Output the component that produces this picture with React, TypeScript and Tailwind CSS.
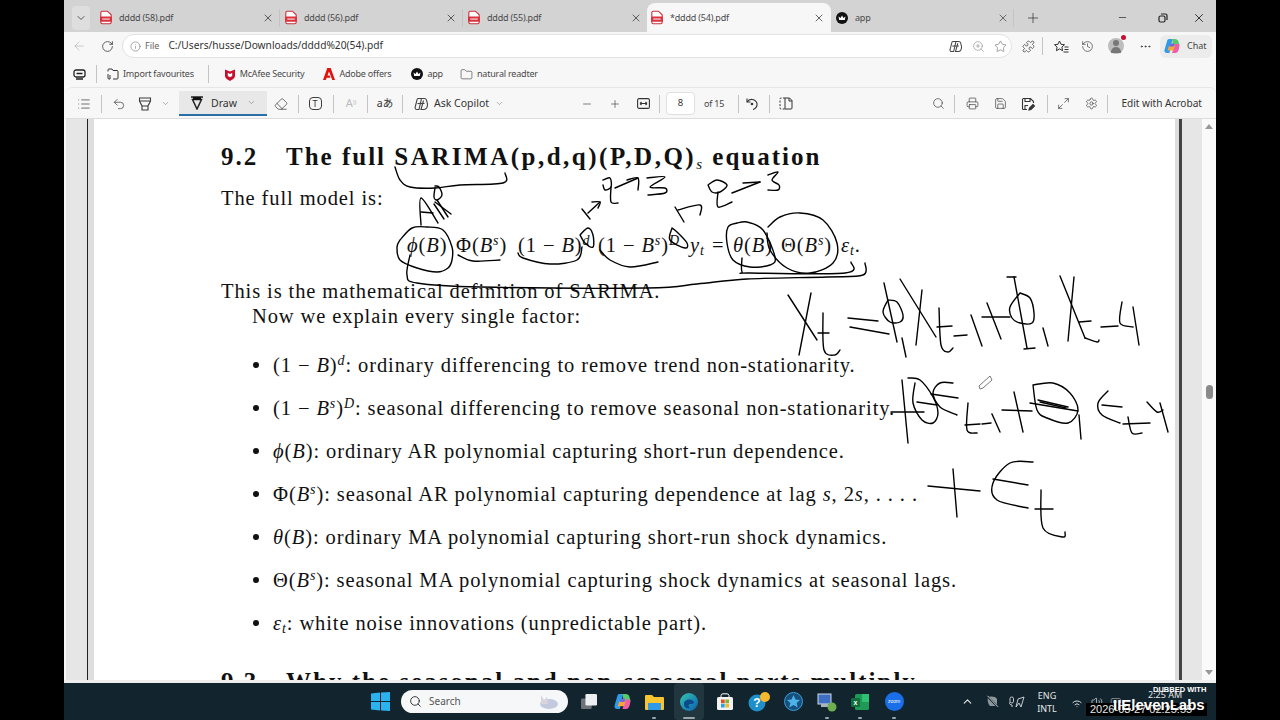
import React from "react";
import {
  ChevronDown, X, Plus, Minus, ArrowLeft, RotateCw, Info, Star, ZoomIn, List, Undo2, Eraser, Search,
  Printer, Save, Maximize2, Settings, ChevronUp, WifiHigh, Volume2, Folder, History, MoreHorizontal, Puzzle, BatteryMedium
} from "lucide-react";

const P = (pts: number[][]) => {
  if (pts.length < 3) return `M${pts[0][0]} ${pts[0][1]} L${pts[1][0]} ${pts[1][1]}`;
  let d = `M${pts[0][0]} ${pts[0][1]}`;
  for (let i = 0; i < pts.length - 1; i++) {
    const p0 = pts[Math.max(0, i - 1)];
    const p1 = pts[i];
    const p2 = pts[i + 1];
    const p3 = pts[Math.min(pts.length - 1, i + 2)];
    const c1x = p1[0] + (p2[0] - p0[0]) / 6;
    const c1y = p1[1] + (p2[1] - p0[1]) / 6;
    const c2x = p2[0] - (p3[0] - p1[0]) / 6;
    const c2y = p2[1] - (p3[1] - p1[1]) / 6;
    d += ` C${c1x} ${c1y} ${c2x} ${c2y} ${p2[0]} ${p2[1]}`;
  }
  return d;
};

const strokes: number[][][] = [
  [[395,167],[400,180],[410,187],[435,188],[460,185],[503,183],[505,173]],
  [[435,188],[434,197],[437,200],[442,195],[439,187],[435,186]],
  [[435,202],[451,214]],[[437,200],[448,217]],[[434,204],[444,219]],
  [[421,225],[421,198],[438,223]],[[421,212],[433,213]],
  [[400,240],[412,228],[427,227],[443,230],[452,247],[452,260],[448,268],[437,272],[417,268],[400,260],[397,247],[400,240]],
  [[410,255],[407,275],[417,283],[480,287],[647,288],[697,284],[747,279],[827,277],[863,275],[865,263]],
  [[458,255],[473,261],[500,260]],
  [[518,253],[523,258],[550,264],[577,260],[582,247]],
  [[580,235],[588,228],[593,235],[593,247],[585,243],[580,235]],
  [[600,250],[610,260],[630,267],[658,262]],
  [[672,228],[670,240],[685,248],[687,243],[677,232],[672,228]],
  [[737,223],[747,222],[763,230],[775,257],[770,265],[750,267],[733,260],[727,243],[728,227],[737,223]],
  [[768,227],[780,217],[800,213],[823,220],[837,243],[833,263],[810,273],[787,268],[770,250],[767,233]],
  [[742,258],[742,272],[750,273],[845,273],[851,262]],
  [[582,209],[590,219]],[[588,213],[600,202]],[[592,202],[600,202],[598,208]],
  [[603,180],[610,178],[611,187],[605,190],[603,185]],[[611,187],[611,202],[618,203]],
  [[615,188],[638,178]],[[627,180],[638,178],[638,190]],
  [[647,178],[665,177],[650,187],[665,188],[665,193],[648,195]],
  [[675,207],[684,222]],[[678,210],[700,205],[700,215]],
  [[708,185],[717,180],[727,185],[720,192],[712,192],[708,185]],[[718,192],[718,207],[732,202]],
  [[732,193],[760,182]],[[743,183],[760,182]],
  [[768,175],[778,172],[772,180],[779,185],[778,190],[768,190]],
  [[788,295],[817,340]],[[811,293],[799,355]],
  [[818,333],[829,333]],[[823,313],[824,350],[835,355],[840,350]],
  [[848,318],[878,321]],[[850,327],[889,334]],
  [[884,283],[897,342]],[[888,300],[897,302],[903,315],[900,322],[890,322],[883,312],[888,300]],
  [[902,338],[906,357]],
  [[900,279],[936,337]],[[922,290],[916,345]],
  [[937,327],[952,326]],[[939,308],[941,345],[948,352],[953,348]],
  [[954,336],[967,335]],[[971,315],[982,346]],
  [[982,317],[1010,317]],[[987,303],[1001,339]],
  [[1007,277],[1016,277]],[[1014,277],[1027,348]],[[1024,349],[1035,348]],
  [[1020,293],[1030,298],[1034,313],[1032,323],[1020,323],[1012,318],[1010,307],[1020,293]],
  [[1043,328],[1048,346]],
  [[1060,276],[1085,338]],[[1074,277],[1068,341]],
  [[1079,322],[1091,321]],[[1085,338],[1097,342],[1099,340]],
  [[1101,327],[1118,326]],
  [[1122,302],[1120,323],[1133,327]],[[1133,307],[1139,345]],
  [[902,380],[908,443]],[[891,412],[924,412]],
  [[908,378],[920,380],[933,397],[938,413],[933,423],[922,420],[913,403],[915,383]],
  [[917,402],[937,405]],
  [[953,383],[940,383],[933,393],[940,407],[957,415]],[[931,394],[958,398]],
  [[965,425],[980,424]],[[968,403],[967,430],[977,433]],
  [[982,424],[991,423]],[[992,414],[1000,432]],
  [[1002,410],[1032,411]],[[1014,392],[1023,432]],
  [[1033,385],[1053,383],[1070,393],[1078,410],[1068,423],[1047,418],[1037,410],[1033,385]],
  [[1030,403],[1078,411]],[[1038,400],[1068,407]],[[1040,402],[1066,408]],
  [[1079,415],[1081,439]],
  [[1108,391],[1098,403],[1102,415],[1120,423]],[[1102,405],[1122,407]],
  [[1123,424],[1150,423]],[[1128,417],[1132,433],[1142,433]],
  [[1147,402],[1157,412],[1163,410]],[[1160,403],[1168,432]],
  [[928,486],[980,491]],[[953,469],[957,517]],
  [[1033,462],[1010,463],[993,483],[997,500],[1028,508]],[[993,479],[1028,485]],
  [[1035,509],[1053,509]],[[1041,490],[1043,528],[1063,537],[1065,532]],
];

const Ink = () => (
  <svg className="absolute left-0 top-0 w-[1280px] h-[680px] pointer-events-none" viewBox="0 0 1280 680" fill="none">
    <g stroke="#000" strokeWidth="1.4" strokeLinecap="round" strokeLinejoin="round">
      {strokes.map((s, i) => <path key={i} d={P(s)} />)}
    </g>
    <path d="M979 386 L980 389 L983 388 L992 380 L990 376 Z" fill="#fff" stroke="#555" strokeWidth="0.8" />
  </svg>
);

const PdfIcon = () => (
  <svg width="12" height="15" viewBox="0 0 13 15">
    <path d="M2.5.7h5.6l4 3.8v8.2a1.6 1.6 0 0 1-1.6 1.6h-8a1.6 1.6 0 0 1-1.6-1.6V2.3A1.6 1.6 0 0 1 2.5.7z" fill="#fff" stroke="#c9303a" strokeWidth="1.2" />
    <rect x="0" y="6.5" width="13" height="5.5" rx="1" fill="#d9343f" />
    <rect x="2.5" y="8.5" width="8" height="1.4" fill="#fff" opacity="0.75" />
  </svg>
);
const Crown = ({ s = 12 }: { s?: number }) => (
  <svg width={s} height={s} viewBox="0 0 12 12">
    <circle cx="6" cy="6" r="6" fill="#111" />
    <path d="M2.5 4.5 L4.5 6 L6 3.5 L7.5 6 L9.5 4.5 L8.8 8 H3.2 Z" fill="#fff" />
  </svg>
);
const CopilotLogo = ({ s = 16 }: { s?: number }) => (
  <svg width={s} height={s} viewBox="0 0 16 16">
    <path d="M5 1h3.5L5.5 15H3C1 15 0 13.5.6 11.5L3 3.2C3.4 1.8 4 1 5 1z" fill="#2f9be8" />
    <path d="M8 1h3c1.8 0 3 .8 3.6 2.8l1 4.2H9z" fill="#58c96c" />
    <path d="M11.5 15H8l3-9h4.2c.6 3-.8 9-3.7 9z" fill="#ef5da8" />
    <path d="M5 8h6l-1.5 4.5h-6z" fill="#f3a53a" />
    <path d="M6.5 5.5h4l-1 3h-4z" fill="#7b62e0" />
  </svg>
);
const CopilotOutline = ({ s = 13 }: { s?: number }) => (
  <svg width={s} height={s} viewBox="0 0 14 14" fill="none" stroke="#444" strokeWidth="1.1">
    <path d="M4 1.5h3.5L5 12.5H3C1.5 12.5.8 11.2 1.2 10L3 3C3.2 2 3.5 1.5 4 1.5z" />
    <path d="M7 1.5h3.5c1 0 1.7.6 2 1.6l.9 3.6c.4 3-1 5.8-3.4 5.8H7l2.5-9" />
    <path d="M3.5 6.5h7" />
  </svg>
);

const Sep = ({ className }: { className: string }) => (
  <div className={`flex justify-center shrink-0 ${className}`}><div className="w-px h-[18px] bg-[#c4c4c4]" /></div>
);
const Cell = ({ className, children }: { className: string; children: React.ReactNode }) => (
  <div className={`flex items-center justify-center shrink-0 h-full ${className}`}>{children}</div>
);
const ic = { size: 14, strokeWidth: 1.25, color: "#3c3c3c" };
const small = "text-[9px] tracking-[-0.2px] text-[#4a4a4a] whitespace-nowrap";

const Tab = ({ title, w, icon, className }: { title: string; w: string; icon: React.ReactNode; className?: string }) => (
  <div className={`flex items-center h-full shrink-0 ${w} ${className ?? ""}`}>
    <div className="w-[23px] pr-[4px] flex justify-center shrink-0">{icon}</div>
    <span className={small}>{title}</span>
  </div>
);

const TabStrip = () => (
  <div className="h-[32px] bg-[#d3d3d3] flex items-end pl-[6px] shrink-0">
    <div className="flex items-center h-[29px] w-full">
      <div className="w-[18px] h-[24px] bg-[#dedede] rounded flex items-center justify-center ml-[2px]"><ChevronDown size={12} strokeWidth={1.6} color="#333" /></div>
      <div className="w-[6px]" />
      <Tab title="dddd (58).pdf" w="w-[164px]" icon={<PdfIcon />} />
      <Cell className="w-[16px]"><X size={12} strokeWidth={1.5} color="#333" /></Cell>
      <Sep className="w-[6px]" />
      <Tab title="dddd (56).pdf" w="w-[162px]" icon={<PdfIcon />} className="ml-[-1px]" />
      <Cell className="w-[16px]"><X size={12} strokeWidth={1.5} color="#333" /></Cell>
      <Sep className="w-[6px]" />
      <Tab title="dddd (55).pdf" w="w-[164px]" icon={<PdfIcon />} className="ml-[-1px]" />
      <Cell className="w-[16px]"><X size={12} strokeWidth={1.5} color="#333" /></Cell>
      <div className="flex items-center w-[184px] h-full bg-[#f7f7f7] rounded-t-lg ml-[3px] shrink-0">
        <div className="w-[23px] pr-[4px] flex justify-center shrink-0"><PdfIcon /></div>
        <span className={`${small} w-[143px]`}>*dddd (54).pdf</span>
        <X size={12} strokeWidth={1.5} color="#333" />
      </div>
      <Tab title="app" w="w-[169px]" icon={<Crown />} className="ml-[1px]" />
      <Cell className="w-[12px] ml-[-4px]"><X size={12} strokeWidth={1.5} color="#444" /></Cell>
      <Sep className="w-[8px]" />
      <Cell className="w-[24px] ml-[4px]"><Plus size={16} strokeWidth={1.1} color="#333" /></Cell>
      <Cell className="w-[14px] ml-[70px]"><Minus size={11} strokeWidth={1.5} color="#222" /></Cell>
      <Cell className="w-[14px] ml-[27px]">
        <svg width="10" height="10" viewBox="0 0 10 10" fill="none" stroke="#222" strokeWidth="1.2"><rect x="1" y="3" width="6" height="6" rx="1.5" /><path d="M3 1h4.5A1.5 1.5 0 0 1 9 2.5V7" /></svg>
      </Cell>
      <Cell className="w-[14px] ml-[22px]"><X size={14} strokeWidth={1.4} color="#111" /></Cell>
    </div>
  </div>
);

const AddressBar = () => (
  <div className="h-[28px] bg-[#f7f7f7] flex items-center shrink-0">
    <Cell className="w-[30px]"><ArrowLeft size={14} strokeWidth={1.2} color="#b5b5b5" /></Cell>
    <Cell className="w-[26px]"><RotateCw size={13} strokeWidth={1.4} color="#333" /></Cell>
    <div className="w-[890px] h-[24px] ml-[2px] rounded-full bg-white border border-[#e2e2e2] flex items-center pl-[7px] shrink-0">
      <Info size={11} strokeWidth={1.2} color="#666" />
      <span className="text-[9px] text-[#666] ml-[4px]">File</span>
      <span className="text-[10.2px] text-[#333] ml-[9px] whitespace-nowrap">C:/Users/husse/Downloads/dddd%20(54).pdf</span>
      <div className="flex-1" />
      <CopilotOutline />
      <Cell className="w-[21px] ml-[6px]"><ZoomIn size={13} strokeWidth={1.1} color="#888" /></Cell>
      <Cell className="w-[21px] ml-[1px]"><Star size={13} strokeWidth={1.1} color="#666" /></Cell>
    </div>
    <Cell className="w-[26px] ml-[3px]"><Puzzle size={13} strokeWidth={1.3} color="#333" /></Cell>
    <Sep className="w-[2px]" />
    <Cell className="w-[26px] ml-[5px]">
      <svg width="15" height="13" viewBox="0 0 15 13" fill="none" stroke="#333" strokeWidth="1"><path d="M5.5 1l1.5 3.3 3.5.4-2.6 2.4.7 3.6-3.1-1.8-3.1 1.8.7-3.6L.5 4.7 4 4.3z" /><path d="M10.5 7h4M10.5 9.5h4M9.5 12h5" /></svg>
    </Cell>
    <Cell className="w-[26px]"><History size={13} strokeWidth={1.2} color="#333" /></Cell>
    <Cell className="w-[32px]">
      <div className="relative w-[16px] h-[16px] rounded-full bg-[#bdbdbd]">
        <div className="absolute right-[-2px] top-[-3px] w-[5px] h-[5px] rounded-full bg-[#c8102e]" />
        <div className="absolute left-[5px] top-[2px] w-[6px] h-[6px] rounded-full bg-[#777]" />
        <div className="absolute left-[3px] top-[9px] w-[10px] h-[6px] rounded-t-full bg-[#777]" />
      </div>
    </Cell>
    <Cell className="w-[26px]"><MoreHorizontal size={13} strokeWidth={1.5} color="#333" /></Cell>
    <div className="flex items-center w-[52px] h-[23px] bg-[#ececec] rounded-md pl-[4px] gap-[7px] ml-[2px]">
      <CopilotLogo />
      <span className="text-[9px] text-[#444]">Chat</span>
    </div>
  </div>
);

const Bookmark = ({ icon, label, className }: { icon: React.ReactNode; label: string; className: string }) => (
  <div className={`flex items-center gap-[4px] shrink-0 ${className}`}>
    {icon}
    <span className={small}>{label}</span>
  </div>
);

const Bookmarks = () => (
  <div className="h-[27px] bg-[#f7f7f7] flex items-center shrink-0 pt-[1px]">
    <Cell className="w-[30px]">
      <svg width="13" height="11" viewBox="0 0 13 11" fill="none" stroke="#222" strokeWidth="1.3"><rect x="1" y="1" width="11" height="7" rx="2" /><path d="M3.5 4.5h6M3 10h7" /></svg>
    </Cell>
    <Sep className="w-[3px] ml-[1px]" />
    <Bookmark className="ml-[9px]" label="Import favourites" icon={
      <svg width="12" height="12" viewBox="0 0 12 12" fill="none" stroke="#333" strokeWidth="1"><path d="M1 3.5V2a1 1 0 0 1 1-1h3l1 1.5h4a1 1 0 0 1 1 1V10a1 1 0 0 1-1 1H6M1 6v4a1 1 0 0 0 1 1h1M3 7v4" /></svg>} />
    <Sep className="w-[2px] ml-[14px]" />
    <Bookmark className="ml-[14px]" label="McAfee Security" icon={
      <svg width="12" height="13" viewBox="0 0 12 13"><path d="M1 1.5 L6 3.5 L11 1.5 V8 C11 10 8 12 6 13 C4 12 1 10 1 8 Z" fill="#c8102e" /><path d="M3.8 4.8 L6 6 L8.2 4.8 V8 L6 9.3 L3.8 8Z" fill="#fff" /></svg>} />
    <Bookmark className="ml-[19px]" label="Adobe offers" icon={
      <svg width="12" height="12" viewBox="0 0 12 12"><path d="M4.3 0 H7.7 L12 12 H9.3 L6 3.6 L4.5 7.6 H6.6 L7.5 9.7 H3.7 L2.7 12 H0 Z" fill="#e0120b" /></svg>} />
    <Bookmark className="ml-[20px]" label="app" icon={<Crown />} />
    <Bookmark className="ml-[17px]" label="natural readter" icon={<Folder size={13} strokeWidth={1.1} color="#333" />} />
  </div>
);

const Toolbar = () => (
  <div className="h-[32px] bg-[#f7f7f7] flex items-center justify-between border-t border-[#e6e6e6] border-b border-b-[#dcdcdc] ml-[2px] rounded-t-md shrink-0 pt-[1px]">
    <div className="flex items-center h-full">
      <Cell className="w-[20px] ml-[8px]"><List {...ic} /></Cell>
      <Sep className="w-[14px]" />
      <Cell className="w-[22px]"><Undo2 {...ic} /></Cell>
      <Cell className="w-[30px]">
        <svg width="14" height="15" viewBox="0 0 14 15" fill="none" stroke="#3c3c3c" strokeWidth="1.1"><path d="M1.5 2h11v3L10 10v4H4v-4L1.5 5z" /><path d="M1.5 5h11M4 10h6" /></svg>
      </Cell>
      <Cell className="w-[10px]"><ChevronDown size={9} strokeWidth={1.3} color="#666" /></Cell>
      <div className="w-[9px]" />
      <div className="w-[88px] h-[25px] bg-[#e8e8e8] border-b-2 border-[#2a6ea6] flex items-center shrink-0">
        <svg className="ml-[11px]" width="14" height="15" viewBox="0 0 14 15"><path d="M1 2h12M2.5 4.5h9L7 14z" fill="none" stroke="#222" strokeWidth="1.5" /><path d="M3 2h8v3H3z" fill="#111" /></svg>
        <span className="text-[10.5px] text-[#333] ml-[7px] pt-[2px]">Draw</span>
        <ChevronDown className="ml-[10px]" size={9} strokeWidth={1.3} color="#666" />
      </div>
      <Cell className="w-[28px]"><Eraser {...ic} /></Cell>
      <Sep className="w-[6px]" />
      <Cell className="w-[28px]">
        <div className="w-[13px] h-[13px] rounded-sm border border-[#3c3c3c] text-[9px] leading-[11px] text-center text-[#333]">T</div>
      </Cell>
      <Sep className="w-[8px]" />
      <Cell className="w-[28px]"><span className="text-[11px] text-[#bbb]">A<sup className="text-[6px]">))</sup></span></Cell>
      <Sep className="w-[4px]" />
      <Cell className="w-[32px]"><span className="text-[10.5px] text-[#333] font-['Noto_Sans','Noto_Sans_CJK_JP',sans-serif]">aあ</span></Cell>
      <Sep className="w-[2px]" />
      <div className="ml-[11px]"><CopilotOutline s={14} /></div>
      <span className="text-[10.5px] text-[#333] ml-[6px] w-[58px] whitespace-nowrap pt-[1px]">Ask Copilot</span>
      <ChevronDown className="ml-[3px]" size={9} strokeWidth={1.3} color="#666" />
      <div className="w-[73px]" />
      <Cell className="w-[20px]"><Minus size={12} strokeWidth={1.2} color="#333" /></Cell>
      <Cell className="w-[20px] ml-[8px]"><Plus size={12} strokeWidth={1.2} color="#333" /></Cell>
      <Cell className="w-[20px] ml-[8px]">
        <svg width="13" height="11" viewBox="0 0 13 11" fill="none" stroke="#333" strokeWidth="1.1"><rect x=".6" y=".6" width="11.8" height="9.8" rx="1.5" /><path d="M3 5.5h7M3 5.5l1.5-1.5M3 5.5l1.5 1.5M10 5.5L8.5 4M10 5.5L8.5 7" /></svg>
      </Cell>
      <Sep className="w-[13px]" />
      <div className="w-[29px] h-[23px] bg-white border border-[#e0e0e0] rounded-sm flex items-center justify-center text-[9.5px] text-[#333] shrink-0">8</div>
      <span className="text-[9px] tracking-[-0.2px] text-[#444] ml-[9px] w-[22px] whitespace-nowrap pt-[1px]">of 15</span>
      <Sep className="w-[20px] ml-[2px]" />
      <Cell className="w-[16px] ml-[-4px]">
        <svg width="14" height="14" viewBox="0 0 14 14" fill="none" stroke="#333" strokeWidth="1.1"><path d="M2 5a5.5 5.5 0 0 1 10 1.5c.5 3-1.5 5.5-4 6" /><path d="M2 1.5V5h3.5" /><circle cx="7" cy="7" r="0.8" fill="#333" /></svg>
      </Cell>
      <Sep className="w-[18px]" />
      <Cell className="w-[16px]">
        <svg width="14" height="13" viewBox="0 0 14 13" fill="none" stroke="#333" strokeWidth="1"><path d="M6 1H2a1 1 0 0 0-1 1v9a1 1 0 0 0 1 1h4" strokeDasharray="2 1.5" /><path d="M6 1h4.5L13 3.5V11a1 1 0 0 1-1 1H6zM10 1v3h3" /></svg>
      </Cell>
    </div>
    <div className="flex items-center h-full">
      <Cell className="w-[18px]"><Search size={13} strokeWidth={1.2} color="#333" /></Cell>
      <Sep className="w-[14px]" />
      <Cell className="w-[22px]"><Printer size={13} strokeWidth={1.2} color="#333" /></Cell>
      <Cell className="w-[34px]"><Save size={13} strokeWidth={1.2} color="#333" /></Cell>
      <Cell className="w-[22px]">
        <svg width="14" height="14" viewBox="0 0 14 14" fill="none" stroke="#333" strokeWidth="1.1"><path d="M6 12.5H2.5a1 1 0 0 1-1-1v-9a1 1 0 0 1 1-1h7l3 3V6M4 1.5v3h5v-3M4 12V8.5h3" /><path d="M8 13l.5-2L12 7.5l1.5 1.5L10 12.5z" fill="#333" /></svg>
      </Cell>
      <Sep className="w-[16px]" />
      <Cell className="w-[16px]"><Maximize2 size={13} strokeWidth={1.2} color="#333" /></Cell>
      <Cell className="w-[24px] ml-[8px]"><Settings size={13} strokeWidth={1.2} color="#333" /></Cell>
      <Sep className="w-[8px]" />
      <span className="text-[10.1px] text-[#333] ml-[10px] mr-[14px] whitespace-nowrap pt-[1px]">Edit with Acrobat</span>
    </div>
  </div>
);

const serif = "font-['Liberation_Serif','Times_New_Roman',serif]";
const Line = ({ children, className }: { children: React.ReactNode; className?: string }) => (
  <div className={`h-[24px] flex items-center whitespace-pre text-[20.5px] tracking-[0.9px] text-[#111] ${className ?? ""}`}>{children}</div>
);
const M = ({ children }: { children: React.ReactNode }) => <i className="italic">{children}</i>;
const Up = ({ children }: { children: React.ReactNode }) => <sup className="text-[14px] italic">{children}</sup>;
const Dn = ({ children }: { children: React.ReactNode }) => <sub className="text-[14px] italic">{children}</sub>;

const Bullet = ({ children, className }: { children: React.ReactNode; className?: string }) => (
  <Line className={`pl-[32px] ${className ?? "mt-[19px]"}`}>
    <span className="w-[6px] h-[6px] rounded-full bg-[#111] mr-[14px] shrink-0" />
    <span>{children}</span>
  </Line>
);

const Eq = ({ children, className }: { children: React.ReactNode; className: string }) => (
  <span className={`shrink-0 whitespace-nowrap ${className}`}>{children}</span>
);

const Page = () => (
  <div className={`flex-1 bg-white overflow-hidden pl-[127px] ${serif}`}>
    <div className="mt-[26px] h-[24px] flex items-center whitespace-pre font-bold text-[25px] tracking-[2px] text-[#111]">
      <span className="w-[65px]">9.2</span>
      <span>The full <span className="tracking-[2.5px]">SARIMA(p,d,q)(P,D,Q)</span><sub className="text-[15px] italic font-normal">s</sub> equation</span>
    </div>
    <Line className="mt-[17px]">The full model is:</Line>
    <Line className="mt-[23px] pl-[186px] tracking-[0.4px]">
      <Eq className="w-[46px]"><M>ϕ</M>(<M>B</M>)</Eq>
      <Eq className="w-[58px] ml-[3px]">Φ(<M>B</M><Up>s</Up>)</Eq>
      <Eq className="w-[80px] ml-[4px]">(1 − <M>B</M>)<Up>d</Up></Eq>
      <Eq className="w-[92px]">(1 − <M>B</M><Up>s</Up>)<Up>D</Up></Eq>
      <Eq className="w-[22px]"><M>y</M><Dn>t</Dn></Eq>
      <Eq className="w-[21px]">=</Eq>
      <Eq className="w-[48px]"><M>θ</M>(<M>B</M>)</Eq>
      <Eq className="w-[60px]">Θ(<M>B</M><Up>s</Up>)</Eq>
      <Eq className="w-[24px]"><M>ε</M><Dn>t</Dn>.</Eq>
    </Line>
    <Line className="mt-[22px]">This is the mathematical definition of SARIMA.</Line>
    <Line className="mt-[1px] pl-[31px]">Now we explain every single factor:</Line>
    <Bullet className="mt-[25px]">(1 − <M>B</M>)<Up>d</Up>: ordinary differencing to remove trend non-stationarity.</Bullet>
    <Bullet>(1 − <M>B</M><Up>s</Up>)<Up>D</Up>: seasonal differencing to remove seasonal non-stationarity.</Bullet>
    <Bullet><M>ϕ</M>(<M>B</M>): ordinary AR polynomial capturing short-run dependence.</Bullet>
    <Bullet>Φ(<M>B</M><Up>s</Up>): seasonal AR polynomial capturing dependence at lag <M>s</M>, 2<M>s</M>, . . . .</Bullet>
    <Bullet><M>θ</M>(<M>B</M>): ordinary MA polynomial capturing short-run shock dynamics.</Bullet>
    <Bullet>Θ(<M>B</M><Up>s</Up>): seasonal MA polynomial capturing shock dynamics at seasonal lags.</Bullet>
    <Bullet><M>ε</M><Dn>t</Dn>: white noise innovations (unpredictable part).</Bullet>
    <div className="mt-[35px] h-[24px] flex items-center whitespace-pre font-bold text-[25px] tracking-[2px] text-[#111]">
      <span className="w-[65px]">9.3</span>
      <span>Why the seasonal and non-seasonal parts multiply</span>
    </div>
  </div>
);

const PageArea = () => (
  <div className="h-[561px] flex bg-[#e6e6e6] shrink-0 ml-[2px]">
    <div className="w-[21px] shrink-0" />
    <div className="w-px bg-[#222] shrink-0" />
    <div className="w-[6px] bg-[#dedede] shrink-0" />
    <Page />
    <div className="w-[4px] bg-[#dedede] shrink-0" />
    <div className="w-[3px] bg-[#444] shrink-0" />
    <div className="w-[20px] shrink-0" />
    <div className="w-[14px] bg-[#fafafa] shrink-0 flex flex-col items-center py-[5px]">
      <div className="w-0 h-0 border-l-[4px] border-r-[4px] border-b-[5px] border-l-transparent border-r-transparent border-b-[#999]" />
      <div className="w-[7px] h-[14px] rounded-full bg-[#8a8a8a] mt-[256px]" />
      <div className="flex-1" />
      <div className="w-0 h-0 border-l-[4px] border-r-[4px] border-t-[5px] border-l-transparent border-r-transparent border-t-[#999]" />
    </div>
  </div>
);

const TI = ({ className, children }: { className: string; children: React.ReactNode }) => (
  <div className={`relative h-full flex items-center justify-center shrink-0 ${className}`}>{children}</div>
);
const Dash = ({ className }: { className?: string }) => (
  <div className={`absolute bottom-[1px] h-[2px] rounded bg-[#9aa5aa] ${className ?? "w-[4px]"}`} />
);

const Taskbar = () => (
  <div className="h-[37px] bg-[#12252f] flex items-center shrink-0 pl-[306px] relative">
    <TI className="w-[20px]">
      <svg width="19" height="19" viewBox="0 0 19 19"><path d="M0 1.5 L9 0.5 V9 H0Z M10 .4 L19 0 V9 H10Z M0 10 H9 V18.5 L0 17.5Z M10 10 H19 V19 L10 18.6Z" fill="#2bb3f0" /></svg>
    </TI>
    <div className="w-[167px] h-[23px] rounded-full bg-[#f5f7f8] ml-[11px] flex items-center pl-[8px] shrink-0">
      <Search size={13} strokeWidth={1.6} color="#222" />
      <span className="text-[10px] text-[#555] ml-[7px]">Search</span>
      <svg className="ml-auto mr-[8px]" width="22" height="16" viewBox="0 0 22 16"><ellipse cx="11" cy="10" rx="9" ry="5" fill="#c3c9de" /><path d="M3 1l3 5 3-3 1 7-7 0z" fill="#d9d4de" /></svg>
    </div>
    <TI className="w-[16px] ml-[13px]">
      <svg width="18" height="18" viewBox="0 0 18 18"><rect x="0" y="5" width="12" height="12" rx="1.5" fill="#6d7378" /><rect x="5" y="0" width="13" height="13" rx="1.5" fill="#eceff1" /></svg>
    </TI>
    <TI className="w-[18px] ml-[16px]"><CopilotLogo s={17} /></TI>
    <TI className="w-[20px] ml-[13px]">
      <svg width="19" height="16" viewBox="0 0 19 16"><path d="M0 2a1 1 0 0 1 1-1h6l2 2h9a1 1 0 0 1 1 1v11a1 1 0 0 1-1 1H1a1 1 0 0 1-1-1z" fill="#f7c52f" /><rect x="3" y="9" width="13" height="7" fill="#2f9be8" /></svg>
      <Dash />
    </TI>
    <TI className="w-[30px] ml-[10px] bg-[#223640] rounded">
      <svg width="18" height="18" viewBox="0 0 18 18"><defs><linearGradient id="edge" x1="0" y1="0" x2="1" y2="1"><stop offset="0" stopColor="#37c6b0" /><stop offset="1" stopColor="#0a5fb0" /></linearGradient></defs><circle cx="9" cy="9" r="9" fill="url(#edge)" /><path d="M4 11c0-5 8-6 10-2 .5 1-1 2-3 2-3 0-3 2-1 4-4 1-6-1-6-4z" fill="#0c4a8c" /></svg>
      <Dash className="w-[12px] bg-[#4aa3e0]" />
    </TI>
    <TI className="w-[20px] ml-[11px]">
      <svg width="18" height="18" viewBox="0 0 18 18"><path d="M5 4V2.5A2 2 0 0 1 7 .8h4a2 2 0 0 1 2 1.7V4" fill="none" stroke="#fff" /><rect x="1" y="4" width="16" height="13" rx="1.5" fill="#f3f3f3" /><rect x="5" y="6.5" width="3.7" height="3.7" fill="#e8492a" /><rect x="9.3" y="6.5" width="3.7" height="3.7" fill="#7cb82f" /><rect x="5" y="10.8" width="3.7" height="3.7" fill="#23a5e8" /><rect x="9.3" y="10.8" width="3.7" height="3.7" fill="#f7b92b" /></svg>
    </TI>
    <TI className="w-[22px] ml-[13px]">
      <svg width="22" height="20" viewBox="0 0 22 20"><circle cx="9" cy="11" r="8.5" fill="#1f8fc9" /><circle cx="17" cy="5" r="5" fill="#f5b82e" /><text x="9" y="15" fontSize="12" fontWeight="bold" textAnchor="middle" fill="#fff" fontFamily="Liberation Sans">?</text></svg>
    </TI>
    <TI className="w-[20px] ml-[13px]">
      <svg width="19" height="19" viewBox="0 0 19 19"><circle cx="9.5" cy="9.5" r="9" fill="#16507e" stroke="#3a9fd8" /><path d="M9.5 3l2 4.5 4.5.5-3.3 3 1 4.5-4.2-2.4-4.2 2.4 1-4.5L3 8l4.5-.5z" fill="#4db2e8" /></svg>
    </TI>
    <TI className="w-[20px] ml-[14px]">
      <svg width="20" height="20" viewBox="0 0 20 20"><rect x="1" y="2" width="13" height="10" fill="#3f6fc2" stroke="#cfd8e0" /><rect x="4" y="12" width="7" height="3" fill="#aab4bc" /><circle cx="15" cy="15" r="4.5" fill="#6fae4e" /></svg>
      <Dash />
    </TI>
    <TI className="w-[18px] ml-[14px]">
      <svg width="18" height="18" viewBox="0 0 18 18"><rect x="4" y="1" width="14" height="16" rx="1.5" fill="#1e9a56" /><rect x="11" y="1" width="7" height="8" fill="#2fc073" /><rect x="0" y="5" width="9" height="9" rx="1" fill="#0f6e3c" /><text x="4.5" y="12" fontSize="7" fontWeight="bold" textAnchor="middle" fill="#fff" fontFamily="Liberation Sans">x</text></svg>
      <Dash />
    </TI>
    <TI className="w-[20px] ml-[15px]">
      <div className="w-[19px] h-[19px] rounded-full bg-[#1a6ee8] flex items-center justify-center text-[5px] text-white font-['Liberation_Sans',sans-serif]">zoom</div>
      <Dash />
    </TI>
    <TI className="w-[16px] ml-[55px]"><ChevronUp size={13} strokeWidth={2} color="#e6e6e6" /></TI>
    <TI className="w-[16px] ml-[9px]">
      <svg width="13" height="13" viewBox="0 0 13 13"><path d="M2 2.5 C4 1 9 1 11 4 L11 11 L4 11 C2 9 1 5 2 2.5z" fill="#8c979c" /><path d="M1 1l11 11" stroke="#12252f" strokeWidth="2" /><path d="M1.5 .8l10.5 11" stroke="#c6ccd0" strokeWidth="1" /></svg>
    </TI>
    <TI className="w-[18px] ml-[8px]">
      <svg width="16" height="12" viewBox="0 0 16 12" fill="none" stroke="#c6ccd0" strokeWidth="1"><rect x="1" y="1" width="3.5" height="6" rx="1.7" /><path d="M0 6c0 2 1.5 3 3 3M3 9v2M7 11l2-8 6-2-3 10-2-4z" /></svg>
    </TI>
    <div className="text-[9px] leading-[13px] text-[#e6e6e6] text-center w-[24px] ml-[9px] shrink-0">ENG<br />INTL</div>
    <TI className="w-[14px] ml-[11px]"><WifiHigh size={14} strokeWidth={1.6} color="#e6e6e6" /></TI>
    <TI className="w-[14px] ml-[6px]"><Volume2 size={12} strokeWidth={1.5} color="#d5d5d5" /></TI>
    <TI className="w-[14px] ml-[6px]"><BatteryMedium size={14} strokeWidth={1.5} color="#888" /></TI>
    <div className="absolute left-[1084px] top-[6px] text-[9px] leading-[12px] text-[#e6e6e6] whitespace-nowrap">2:25 AM</div>
    <div className="absolute left-[1089px] top-[2px] text-[7.5px] leading-[10px] font-bold text-white font-['Liberation_Sans',sans-serif] whitespace-nowrap">DUBBED WITH</div>
    <div className="absolute left-[1022px] top-[20px] w-[121px] h-[13px] bg-black" />
    <div className="absolute left-[1026px] top-[19px] text-[11px] leading-[14px] text-[#e8e8e8] font-['Liberation_Sans',sans-serif] whitespace-nowrap">2026-03-27 02:25:55</div>
    <div className="absolute left-[1049px] top-[14px] text-[15px] leading-[16px] font-bold text-white font-['Liberation_Sans',sans-serif] whitespace-nowrap">IIElevenLabs</div>
  </div>
);

export default function App() {
  return (
    <div className="w-[1280px] h-[720px] bg-black flex overflow-hidden relative font-['Noto_Sans',sans-serif]">
      <div className="w-[64px] shrink-0" />
      <div className="w-[1152px] shrink-0 flex flex-col bg-[#f7f7f7]">
        <TabStrip />
        <AddressBar />
        <Bookmarks />
        <Toolbar />
        <PageArea />
        <div className="h-[3px] bg-[#eeeeee] shrink-0" />
        <Taskbar />
      </div>
      <div className="w-[64px] shrink-0" />
      <Ink />
    </div>
  );
}
